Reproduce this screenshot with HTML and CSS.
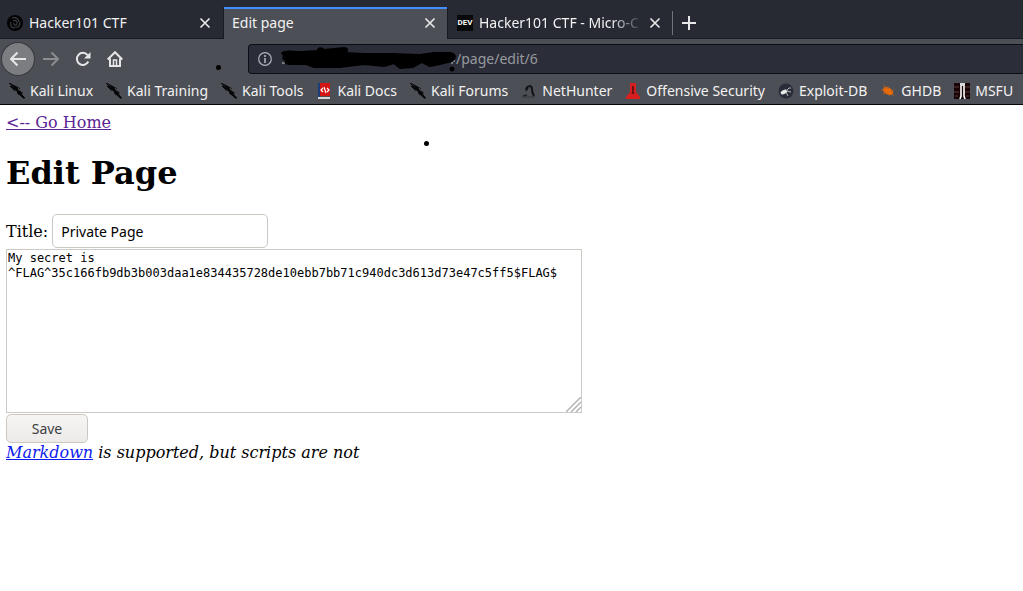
FILE: index.html
```html
<!DOCTYPE html>
<html lang="en">
<head>
<meta charset="utf-8">
<title>Edit page</title>
<link rel="stylesheet" href="styles.css">
</head>
<body>
<svg class="defs" aria-hidden="true">
  <symbol id="kali" viewBox="0 0 16 16"><path d="M0 0l4 2 4 2 1 3 3 2 1 3 3 3-2 0-3-3-2-1-1-3-4-2L1 3l3 1z" fill="#050506" stroke="#050506" stroke-width=".8"/><path d="M4 7l3 0M9 4l2 2M12 9l2 1M2 1l3 4" stroke="#18191b" stroke-width="1"/></symbol>
  <symbol id="close" viewBox="0 0 12 12"><path d="M1.500 1.500l9 9M10.500 1.500l-9 9" stroke="#e6e6e6" stroke-width="1.700"/></symbol>
</svg>
<header class="browser">
  <div class="tabs">
    <div class="tab">
      <svg class="icon" viewBox="0 0 16 16"><circle cx="8" cy="8" r="8" fill="#030304"/><g fill="none" stroke="#3c3e44" stroke-width="1.200"><path d="M5 3c4-1 7 1 7 4M13 7c0 4-2 6-5 5M8 13c-4 0-5-3-4-6M6 6c3-2 5 1 4 3-1 2-4 1-3-1"/></g></svg>
      <span class="tab-title">Hacker101 CTF</span>
      <button class="close" aria-label="Close tab"><svg><use href="#close"/></svg></button>
    </div>
    <div class="tab active">
      <span class="tab-title">Edit page</span>
      <button class="close" aria-label="Close tab"><svg><use href="#close"/></svg></button>
    </div>
    <div class="tab last">
      <span class="dev icon">DEV</span>
      <span class="tab-title fade">Hacker101 CTF - Micro-C</span>
      <button class="close" aria-label="Close tab"><svg><use href="#close"/></svg></button>
    </div>
    <button class="new-tab" aria-label="New tab"><svg viewBox="0 0 14 14"><path d="M7 0v14M0 7h14" stroke="#e8e8e8" stroke-width="2"/></svg></button>
  </div>
  <div class="toolbar">
    <button class="nav back" aria-label="Back"><svg viewBox="0 0 16 16"><path d="M16 8H1.500M7.500 1.500L1 8l6.500 6.500"/></svg></button>
    <button class="nav forward" aria-label="Forward"><svg viewBox="0 0 16 16"><path d="M0 8h14.500M8.500 1.500L15 8l-6.500 6.500"/></svg></button>
    <button class="nav" aria-label="Reload"><svg viewBox="0 0 16 16"><path d="M13.300 10.500A6 6 0 1 1 12.500 4"/><path d="M15.500 1v6.500H9z" fill="#e6e6e6" stroke="none"/></svg></button>
    <button class="nav" aria-label="Home"><svg viewBox="0 0 16 16"><path d="M.700 8.500L8 1.200l7.300 7.300M3 7.500V15h10V7.500"/><path d="M6.500 15V9h3v6" stroke-width="1.500"/></svg></button>
    <div class="address">
      <svg class="info" viewBox="0 0 14 14"><circle cx="7" cy="7" r="6.300" fill="none" stroke="#b1b3b8" stroke-width="1.200"/><path d="M7 6v5M7 3v2" stroke="#b1b3b8" stroke-width="1.600"/></svg>
      <svg class="redaction" viewBox="0 0 176 25" aria-hidden="true"><path d="M2 17h5M169 15h6M172 10v8" stroke="#c8c9cb" stroke-width="1"/><path d="M2 7C6 4 12 6 20 6L38 5C38 2 41 1 44 4L64 2C68 2 68 5 65 7L84 8L112 8L140 9L154 7L170 7C176 8 176 12 172 15L160 18L150 20L142 16L133 21L120 22L114 17L104 20L84 18L60 21L34 21L26 18L10 18C4 18 4 15 9 14C4 14 2 13 4 10Z" stroke="#000" stroke-width="2" stroke-linejoin="round"/><circle cx="172" cy="23" r="2.500"/></svg>
      <input class="url" aria-label="Address" value="/page/edit/6">
    </div>
    <i class="ink ink-bar"></i>
  </div>
  <nav class="bookmarks">
    <a href="#"><svg class="icon"><use href="#kali"/></svg>Kali Linux</a>
    <a href="#"><svg class="icon"><use href="#kali"/></svg>Kali Training</a>
    <a href="#"><svg class="icon"><use href="#kali"/></svg>Kali Tools</a>
    <a href="#"><svg class="icon" viewBox="0 0 16 16"><path d="M2 0h2v14H2z" fill="#193e7a"/><path d="M4 0h10v13H4z" fill="#d41412"/><path d="M2 14h12v2H2z" fill="#d9d5d5"/><path d="M7 5L5 7l2 2M11 5l2 2-2 2M8 4l2 6" fill="none" stroke="#fff" stroke-width="1.200"/></svg>Kali Docs</a>
    <a href="#"><svg class="icon"><use href="#kali"/></svg>Kali Forums</a>
    <a href="#"><svg class="icon" viewBox="0 0 16 16"><path d="M2 13l4-1M7 5l-2 3" fill="none" stroke="#222327" stroke-width="1.400"/><path d="M5 7c1-5 6-5 6-1 0 3 0 4 2 7" fill="none" stroke="#101113" stroke-width="2"/><path d="M1 14h13" stroke="#36383d"/></svg>NetHunter</a>
    <a href="#"><svg class="icon" viewBox="0 0 16 16"><path d="M5 0h6v9l4 5v2H1v-2l4-5z" fill="#d81f1f"/><path d="M7 3h2v7l1 1H6l1-1z" fill="#6d1012"/></svg>Offensive Security</a>
    <a href="#"><svg class="icon" viewBox="0 0 16 16"><circle cx="8" cy="8" r="7.500" fill="#292d39"/><ellipse cx="6" cy="9" rx="3.500" ry="2" transform="rotate(-25 6 9)" fill="#e8e8e8"/><path d="M8 8l3-3 2 0M9 8l4 1M8 9l2 4" fill="none" stroke="#b5b6b8"/></svg>Exploit-DB</a>
    <a href="#"><svg class="icon" viewBox="0 0 16 16"><ellipse cx="8" cy="8" rx="5.500" ry="3.300" transform="rotate(28 8 8)" fill="#e86a08"/><path d="M5 6L4 2M8 6V3M11 8l3-1M4 8L1 7M6 10l-3 1M9 11v2M12 11l2 2" stroke="#a65c2a"/></svg>GHDB</a>
    <a href="#"><svg class="icon" viewBox="0 0 16 16"><path d="M0 0h16v16H0z" fill="#180405"/><path d="M0 4h5M11 4h5M0 9h5M11 9h5M1 13h3M12 13h3" stroke="#5a3c3c"/><path d="M6 16l1-3V2h3v11l1 3" fill="none" stroke="#fff" stroke-width="1.600"/><path d="M6 1h5" stroke="#d8d8d8" stroke-width="2"/></svg>MSFU</a>
  </nav>
</header>
<main class="page">
  <a class="visited" href="#">&lt;-- Go Home</a>
  <h1>Edit Page</h1>
  <form>
    <div class="title-row"><label for="title">Title:</label><input id="title" value="Private Page"></div>
    <div class="editor">
      <textarea aria-label="Body" spellcheck="false">My secret is
^FLAG^35c166fb9db3b003daa1e834435728de10ebb7bb71c940dc3d613d73e47c5ff5$FLAG$</textarea>
      <svg class="grip" viewBox="0 0 15 15"><path d="M0 15L15 0M5 15L15 5M10 15l5-5" stroke="#b4b4b4" stroke-width="1.500"/></svg>
    </div>
    <button class="save" type="button">Save</button>
    <div class="hint"><a href="#">Markdown</a> is supported, but scripts are not</div>
  </form>
  <i class="ink ink-page"></i>
</main>
</body>
</html>
```
FILE: styles.css
```css
* { box-sizing: border-box; }
body { margin: 0; background: #fff; color: #000; font: 16px/19px "DejaVu Serif", serif; }
button { margin: 0; padding: 0; border: 0; background: none; }
.defs { position: absolute; width: 0; height: 0; }
.browser { font: 14px/20px "Noto Sans", sans-serif; color: #f2f2f2; background: #4d4f56; border-bottom: 1px solid #050507; }
.icon { width: 16px; height: 16px; flex: none; }
.tabs { display: flex; height: 39px; padding-top: 7px; background: #272933; box-shadow: inset 0 -1px #191a22; }
.tab { flex: 0 1 223px; min-width: 0; display: flex; align-items: center; gap: 6px; padding: 0 12px 0 7px; }
.active { flex-basis: 225px; padding-left: 8px; padding-right: 11px; background: #4d4f56; border: 1px solid #191a22; border-width: 0 1px; box-shadow: inset 0 2px #458dfc; }
.last { flex-basis: 224px; padding-left: 9px; padding-right: 11px; }
.tab-title { flex: 1; min-width: 0; overflow: hidden; white-space: nowrap; }
.fade { -webkit-mask-image: linear-gradient(to left, transparent, #000 32px); mask-image: linear-gradient(to left, transparent, #000 32px); }
.dev { background: #08090a; color: #fff; font: bold 8px/16px Roboto, sans-serif; text-align: center; }
.close { flex: none; width: 12px; height: 12px; }
.close svg { display: block; width: 12px; height: 12px; }
.new-tab { align-self: center; display: flex; align-items: center; height: 24px; padding-left: 9px; border-left: 1px solid #70727a; }
.new-tab svg { width: 14px; height: 14px; }
.toolbar { position: relative; display: flex; align-items: center; height: 39px; padding-left: 2px; }
.nav { width: 32px; height: 32px; flex: none; display: grid; place-items: center; }
.nav svg { width: 16px; height: 16px; fill: none; stroke: #e6e6e6; stroke-width: 2; }
.back { margin-right: 1px; border-radius: 50%; background: #7c7d81; box-shadow: 0 0 0 1px #36383d; }
.forward svg { stroke: #8b8c90; }
.address { position: relative; flex: 1; min-width: 0; height: 30px; margin-left: 117px; display: flex; align-items: center; padding-left: 9px; gap: 8px; background: #2b2e39; border: 1px solid #0d0e13; border-right: 0; border-radius: 4px 0 0 4px; }
.info { width: 14px; height: 14px; flex: none; }
.redaction { width: 176px; height: 25px; flex: none; margin-right: -8px; overflow: visible; }
.url { flex: 1; min-width: 0; padding: 0; border: 0; background: none; color: #989a9f; font: inherit; }
.bookmarks { display: flex; align-items: center; gap: 13px; height: 26px; padding: 0 8px 0 9px; }
.bookmarks a { display: flex; align-items: center; gap: 5px; color: inherit; text-decoration: none; white-space: nowrap; }
.ink { position: absolute; width: 5px; height: 5px; border-radius: 50%; background: #000; }
.ink-bar { left: 216px; top: 26px; }
.page { position: relative; padding: 8px 6px; }
.ink-page { left: 424px; top: 36px; }
.visited { color: #5a2494; }
h1 { margin: 22px 0; font-size: 32px; line-height: 38px; }
.title-row { display: flex; align-items: center; gap: 4px; margin-bottom: 1px; }
.title-row input { width: 216px; height: 34px; padding: 0 8px; border: 1px solid #cdc7c2; border-radius: 5px; background: #fff; color: #000; font: 14px "Noto Sans", sans-serif; }
.editor { position: relative; width: 576px; max-width: 100%; }
textarea { display: block; width: 100%; height: 164px; padding: 1px; border: 1px solid #cdc9c5; background: #fff; color: #000; font: 12px/15px "DejaVu Sans Mono", monospace; resize: none; }
.grip { position: absolute; right: 1px; bottom: 1px; width: 15px; height: 15px; }
.save { display: block; margin-top: 1px; width: 82px; height: 29px; border: 1px solid #cdc7c2; border-radius: 5px; background: linear-gradient(#f6f5f4, #edebe9); color: #3c4042; font: 14px "Noto Sans", sans-serif; }
.hint { font-style: italic; }
.hint a { color: #0c1cee; }
```
